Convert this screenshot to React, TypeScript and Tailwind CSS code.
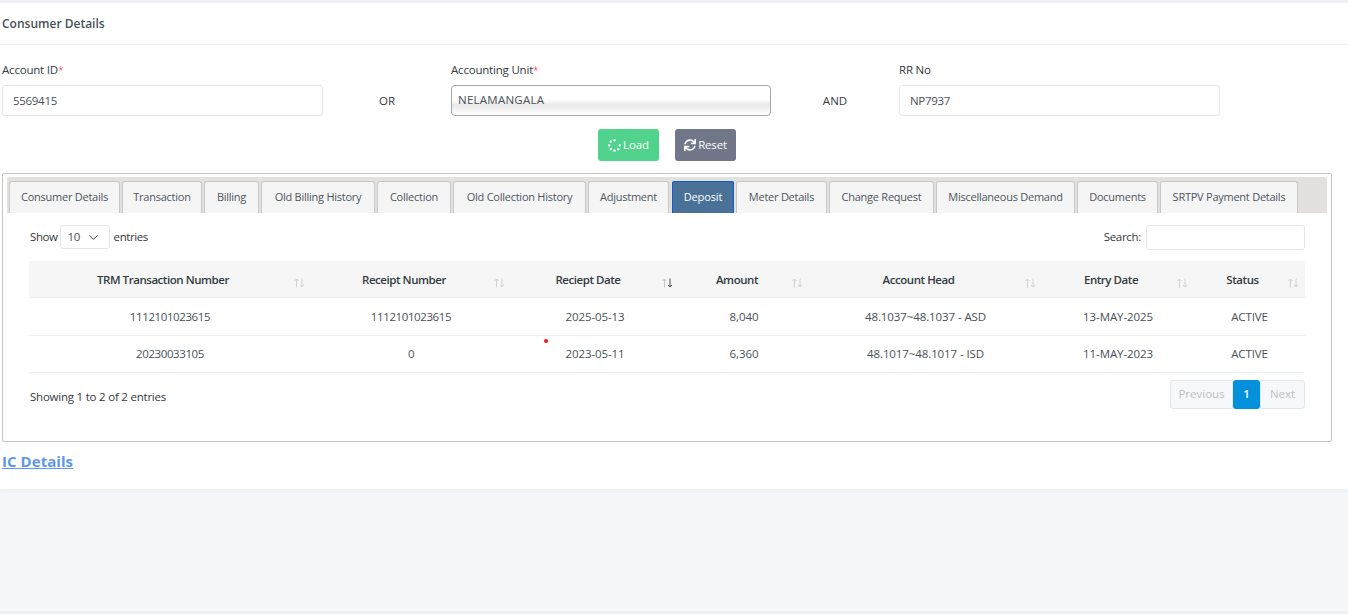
import { FaSpinner, FaSync } from "react-icons/fa";
import { ChevronDown } from "lucide-react";

const tabs = [
  { label: "Consumer Details", width: "w-[111px]" },
  { label: "Transaction", width: "w-[80px]" },
  { label: "Billing", width: "w-[55px]" },
  { label: "Old Billing History", width: "w-[114px]" },
  { label: "Collection", width: "w-[74px]" },
  { label: "Old Collection History", width: "w-[133px]" },
  { label: "Adjustment", width: "w-[81px]" },
  { label: "Deposit", width: "w-[62px]", active: true },
  { label: "Meter Details", width: "w-[91px]" },
  { label: "Change Request", width: "w-[105px]" },
  { label: "Miscellaneous Demand", width: "w-[139px]" },
  { label: "Documents", width: "w-[81px]" },
  { label: "SRTPV Payment Details", width: "w-[138px]" },
];

const columns = [
  { label: "TRM Transaction Number", width: "w-[282px]" },
  { label: "Receipt Number", width: "w-[200px]" },
  { label: "Reciept Date", width: "w-[168px]", sorted: true },
  { label: "Amount", width: "w-[130px]" },
  { label: "Account Head", width: "w-[233px]" },
  { label: "Entry Date", width: "w-[152px]" },
  { label: "Status", width: "w-[111px]" },
];

const rows = [
  ["1112101023615", "1112101023615", "2025-05-13", "8,040", "48.1037~48.1037 - ASD", "13-MAY-2025", "ACTIVE"],
  ["20230033105", "0", "2023-05-11", "6,360", "48.1017~48.1017 - ISD", "11-MAY-2023", "ACTIVE"],
];

const SortIcon = ({ sorted }: { sorted?: boolean }) => (
  <svg width="11" height="10" viewBox="0 0 11 10" fill="none" className="absolute right-[6px] top-[17px]">
    <path d="M2.5 9.5V1M0.5 3L2.5 1L4.5 3" stroke={sorted ? "#c4c4c4" : "#cfd2d4"} />
    <path d="M8 0.5V9M6 7L8 9L10 7" stroke={sorted ? "#4b4b4b" : "#cfd2d4"} />
  </svg>
);

const Label = ({ text, required }: { text: string; required?: boolean }) => (
  <label className="mb-[7px] h-[16px] leading-[16px] tracking-[-0.2px] text-[#343a40]">
    {text}
    {required && <span className="text-[10px] font-light text-[#f00]">*</span>}
  </label>
);

const Field = ({ label, value, required }: { label: string; value: string; required?: boolean }) => (
  <div className="flex flex-col">
    <Label text={label} required={required} />
    <div className="flex h-[31px] items-center rounded-[3px] border border-[#e4e6e9] bg-white px-[10px] tracking-[-0.3px] text-[#495057]">
      {value}
    </div>
  </div>
);

export default function App() {
  return (
    <div className="flex h-[614px] flex-col bg-[#f6f7f9] font-['Open_Sans',sans-serif] text-[11.5px] text-[#343a40]">
      <div className="h-[3px] bg-[#eef0f4]" />
      <div className="h-[486px] bg-white shadow-[0_3px_2px_#eef0f5]">
        <div className="flex h-[42px] items-center border-b border-[#eef0f2] pl-[2px] text-[12px] font-semibold text-[#495057]">
          Consumer Details
        </div>

        <div className="grid grid-cols-[321px_128px_320px_128px_321px] pl-[2px] pt-[17px]">
          <Field label="Account ID" value="5569415" required />
          <div className="flex items-center justify-center pt-[23px]">OR</div>
          <div className="flex flex-col">
            <Label text="Accounting Unit" required />
            <div className="flex h-[31px] items-start rounded-[4px] border border-[#a6a6a6] bg-[linear-gradient(#ffffff_45%,#e9e9e9_65%,#ffffff)] px-[6px] pt-[5px] tracking-[0.25px] text-[#495057]">
              NELAMANGALA
            </div>
          </div>
          <div className="flex items-center justify-center pt-[23px]">AND</div>
          <Field label="RR No" value="NP7937" />
        </div>

        <div className="flex w-[1334px] justify-center gap-[16px] pt-[13px]">
          <button className="flex h-[32px] w-[61px] items-center justify-center gap-[2px] rounded-[3px] bg-[#52d38d] tracking-[-0.1px] text-white">
            <FaSpinner className="size-[13px]" />
            Load
          </button>
          <button className="flex h-[32px] w-[61px] items-center justify-center gap-[2px] rounded-[3px] bg-[#717689] tracking-[-0.2px] text-white">
            <FaSync className="size-[12px]" />
            Reset
          </button>
        </div>

        <div className="ml-[2px] mt-[12px] h-[269px] w-[1330px] rounded-[2px] border border-[#c4c4c4] px-[4px] pt-[3px]">
          <div className="flex h-[36px] gap-[2px] rounded-t-[2px] bg-[#e3e0de] pl-[2px] pt-[4px]">
            {tabs.map((tab) => (
              <div
                key={tab.label}
                className={
                  tab.active
                    ? `${tab.width} ml-[1px] flex items-center justify-center rounded-t-[2px] border border-b-0 border-[#0d5bd6] bg-[#4a7298] text-[11px] tracking-[-0.1px] text-white`
                    : `${tab.width} flex items-center justify-center rounded-t-[3px] border border-b-0 border-[#c8c8c8] bg-[#f5f5f5] text-[11px] tracking-[-0.25px] text-[#4f5560]`
                }
              >
                {tab.label}
              </div>
            ))}
          </div>

          <div className="mx-[22px] mt-[12px]">
            <div className="flex h-[24px] items-center justify-between">
              <div className="flex items-center gap-[2px] tracking-[-0.4px]">
                <span className="pl-[1px]">Show</span>
                <div className="flex h-[24px] w-[50px] items-center justify-between rounded-[3px] border border-[#e4e6e9] pl-[7px] pr-[8px] text-[#495057]">
                  10
                  <ChevronDown className="size-[15px] text-[#343a40]" strokeWidth={1.5} />
                </div>
                <span className="pl-[2px]">entries</span>
              </div>
              <div className="flex items-center gap-[5px] tracking-[-0.3px]">
                Search:
                <div className="h-[25px] w-[159px] rounded-[3px] border border-[#e4e6e9]" />
              </div>
            </div>

            <table className="mt-[12px] w-[1276px] table-fixed border-collapse">
              <thead>
                <tr className="h-[36px] border-b border-[#eceeef] bg-[#f6f6f6]">
                  {columns.map((col) => (
                    <th key={col.label} className={`${col.width} relative pr-[14px] pt-[2px] text-center font-semibold tracking-[-0.45px] text-[#343a40]`}>
                      {col.label}
                      <SortIcon sorted={col.sorted} />
                    </th>
                  ))}
                </tr>
              </thead>
              <tbody>
                {rows.map((row, r) => (
                  <tr key={row[0]} className={r === 0 ? "h-[38px] border-b border-[#eceeef]" : "h-[37px] border-b border-[#eceeef]"}>
                    {row.map((cell, i) => (
                      <td key={i} className={`${i < 2 ? "tracking-[-0.4px]" : "tracking-[-0.1px]"} ${r === 0 ? "pt-[2px]" : ""} text-center text-[#495057]`}>
                        {cell}
                      </td>
                    ))}
                  </tr>
                ))}
              </tbody>
            </table>

            <div className="mt-[7px] flex items-start justify-between">
              <div className="pl-[1px] pt-[8px] tracking-[-0.22px]">Showing 1 to 2 of 2 entries</div>
              <div className="flex h-[29px] items-stretch text-[#b9bfc7]">
                <div className="flex w-[63px] items-center justify-center rounded-l-[3px] border border-[#e4e7ea] bg-[#f7f8fa]">Previous</div>
                <div className="flex w-[27px] items-center justify-center rounded-[3px] bg-[#0391dc] font-semibold text-white">1</div>
                <div className="flex w-[45px] items-center justify-center rounded-r-[3px] border border-[#e4e7ea] bg-[#f7f8fa]">Next</div>
              </div>
            </div>
          </div>
        </div>

        <a className="ml-[2px] mt-[8px] block text-[15px] font-bold tracking-[0.05px] text-[#5f97ee] underline">IC Details</a>
      </div>

      <div className="flex-1" />
      <div className="h-[3px] bg-[#eff0f2]" />

      <span className="absolute left-[543.5px] top-[338.5px] size-[4px] rounded-full bg-[#e8141a]" />
    </div>
  );
}
